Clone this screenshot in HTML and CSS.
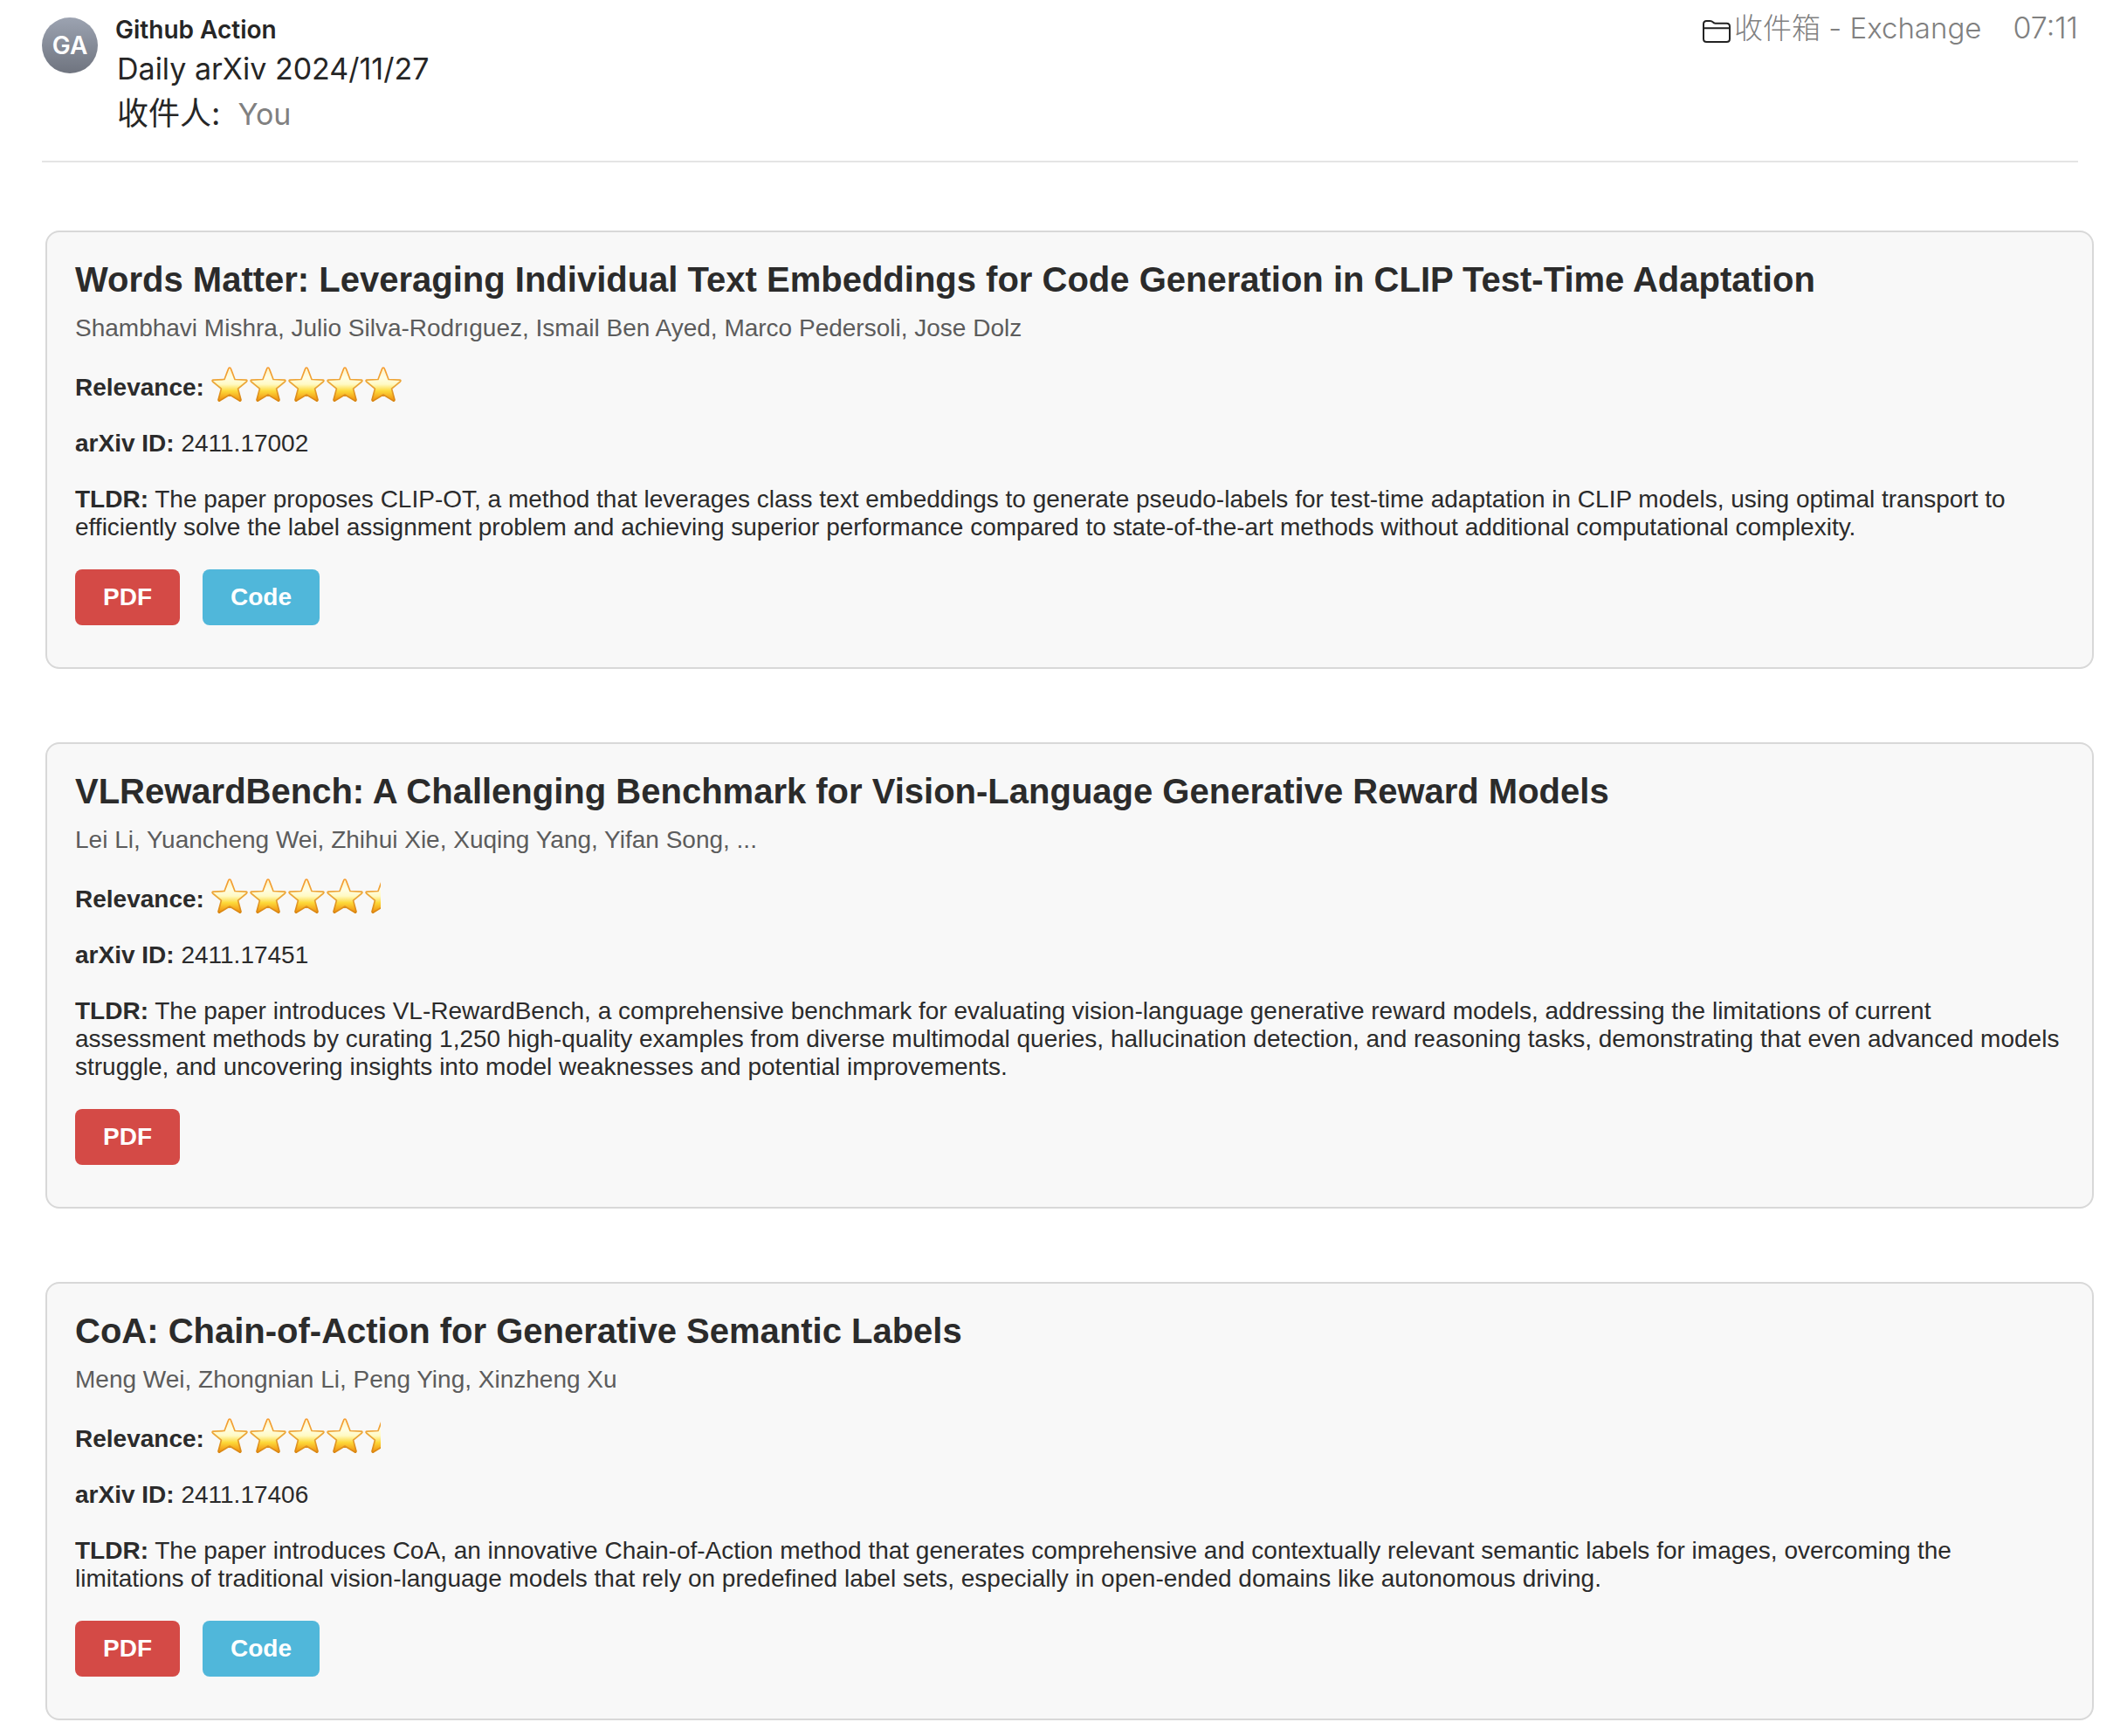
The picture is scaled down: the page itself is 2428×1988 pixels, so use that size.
FILE: index.html
```html
<!DOCTYPE html>
<html lang="zh-CN">
<head>
  <meta charset="UTF-8" />
  <title>Daily arXiv 2024/11/27</title>
  <link rel="stylesheet" href="styles.css">
</head>
<body>

  <!-- shared star shape -->
  <svg class="defs" width="0" height="0" aria-hidden="true">
    <defs>
      <linearGradient id="star-fill" x1="0" y1="0" x2="0" y2="1">
        <stop offset="0" stop-color="#fff3c0" />
        <stop offset="0.3" stop-color="#fffde4" />
        <stop offset="0.5" stop-color="#fffac4" />
        <stop offset="0.7" stop-color="#fdd93a" />
        <stop offset="1" stop-color="#f08c0c" />
      </linearGradient>
      <linearGradient id="star-line" x1="0" y1="0" x2="0" y2="1">
        <stop offset="0" stop-color="#f59a2c" />
        <stop offset="0.5" stop-color="#eba93c" />
        <stop offset="1" stop-color="#d98510" />
      </linearGradient>
      <symbol id="star" viewBox="0 0 44 40">
        <path d="M21 1 Q22 1 22.5 2.5 L27 14.5 L40 15.1 Q41.6 15.8 40.4 17 L30.6 25.2 L34 38 Q33.8 39.6 32.2 38.9 L21 32 L9.8 38.9 Q8.2 39.6 8 38 L11.4 25.2 L1.6 17 Q0.4 15.8 2 15.1 L15 14.5 L19.5 2.5 Q20 1 21 1 Z" fill="url(#star-fill)" stroke="url(#star-line)" stroke-width="1.7" stroke-linejoin="round" />
      </symbol>
    </defs>
  </svg>

  <header class="mail-header">
    <div class="avatar">GA</div>
    <div class="mail-info">
      <div class="sender">Github Action</div>
      <div class="subject">Daily arXiv 2024/11/27</div>
      <div class="recipient">收件人: <span class="you">You</span></div>
    </div>
    <div class="mail-meta">
      <svg class="folder" viewBox="0 0 32 26" aria-hidden="true">
        <path d="M1 21.5V4.5Q1 1 4.500 1H8.500Q10.500 1 11.500 2.200Q12.800 3.700 14.500 3.700H27.500Q31 3.700 31 7.200V21.500Q31 25 27.500 25H4.500Q1 25 1 21.500Z M1 9.300H31" fill="none" stroke="#222" stroke-width="2" />
      </svg>
      <span class="mailbox">收件箱 - Exchange</span>
      <span class="time">07:11</span>
    </div>
  </header>

  <main class="papers">

    <article class="paper">
      <h2>Words Matter: Leveraging Individual Text Embeddings for Code Generation in CLIP Test-Time Adaptation</h2>
      <p class="authors">Shambhavi Mishra, Julio Silva-Rodrıguez, Ismail Ben Ayed, Marco Pedersoli, Jose Dolz</p>
      <div class="relevance">
        <strong>Relevance:</strong>
        <span class="stars" role="img" aria-label="5 of 5">
          <svg class="star"><use href="#star" /></svg>
          <svg class="star"><use href="#star" /></svg>
          <svg class="star"><use href="#star" /></svg>
          <svg class="star"><use href="#star" /></svg>
          <svg class="star"><use href="#star" /></svg>
        </span>
      </div>
      <p><strong>arXiv ID:</strong> 2411.17002</p>
      <p><strong>TLDR:</strong> The paper proposes CLIP-OT, a method that leverages class text embeddings to generate pseudo-labels for test-time adaptation in CLIP models, using optimal transport to efficiently solve the label assignment problem and achieving superior performance compared to state-of-the-art methods without additional computational complexity.</p>
      <div class="links">
        <a class="btn pdf" href="#">PDF</a>
        <a class="btn code" href="#">Code</a>
      </div>
    </article>

    <article class="paper">
      <h2>VLRewardBench: A Challenging Benchmark for Vision-Language Generative Reward Models</h2>
      <p class="authors">Lei Li, Yuancheng Wei, Zhihui Xie, Xuqing Yang, Yifan Song, ...</p>
      <div class="relevance">
        <strong>Relevance:</strong>
        <span class="stars" role="img" aria-label="4.5 of 5">
          <svg class="star"><use href="#star" /></svg>
          <svg class="star"><use href="#star" /></svg>
          <svg class="star"><use href="#star" /></svg>
          <svg class="star"><use href="#star" /></svg>
          <span class="half"><svg class="star"><use href="#star" /></svg></span>
        </span>
      </div>
      <p><strong>arXiv ID:</strong> 2411.17451</p>
      <p><strong>TLDR:</strong> The paper introduces VL-RewardBench, a comprehensive benchmark for evaluating vision-language generative reward models, addressing the limitations of current assessment methods by curating 1,250 high-quality examples from diverse multimodal queries, hallucination detection, and reasoning tasks, demonstrating that even advanced models struggle, and uncovering insights into model weaknesses and potential improvements.</p>
      <div class="links">
        <a class="btn pdf" href="#">PDF</a>
      </div>
    </article>

    <article class="paper">
      <h2>CoA: Chain-of-Action for Generative Semantic Labels</h2>
      <p class="authors">Meng Wei, Zhongnian Li, Peng Ying, Xinzheng Xu</p>
      <div class="relevance">
        <strong>Relevance:</strong>
        <span class="stars" role="img" aria-label="4.5 of 5">
          <svg class="star"><use href="#star" /></svg>
          <svg class="star"><use href="#star" /></svg>
          <svg class="star"><use href="#star" /></svg>
          <svg class="star"><use href="#star" /></svg>
          <span class="half"><svg class="star"><use href="#star" /></svg></span>
        </span>
      </div>
      <p><strong>arXiv ID:</strong> 2411.17406</p>
      <p><strong>TLDR:</strong> The paper introduces CoA, an innovative Chain-of-Action method that generates comprehensive and contextually relevant semantic labels for images, overcoming the limitations of traditional vision-language models that rely on predefined label sets, especially in open-ended domains like autonomous driving.</p>
      <div class="links">
        <a class="btn pdf" href="#">PDF</a>
        <a class="btn code" href="#">Code</a>
      </div>
    </article>

  </main>

</body>
</html>
```
FILE: styles.css
```css
* {
  box-sizing: border-box;
}

body {
  margin: 0;
  background: #fff;
  color: #2b2b2b;
  font-family: "Liberation Sans", Arial, sans-serif;
  font-size: 28px;
  line-height: 32px;
}

.defs {
  display: block;
}

/* mail header */
.mail-header {
  display: flex;
  align-items: flex-start;
  margin: 0 48px;
  padding: 16px 0 28px;
  border-bottom: 2px solid #e4e4e4;
  font-family: Inter, "Noto Sans CJK SC", sans-serif;
}

.avatar {
  width: 64px;
  height: 64px;
  margin-top: 4px;
  border-radius: 50%;
  background: linear-gradient(#9ca3b1, #6f747f);
  color: #fff;
  font-size: 28px;
  font-weight: 600;
  line-height: 64px;
  text-align: center;
}

.mail-info {
  flex: 1;
  margin-left: 20px;
  color: #262626;
}

.sender {
  font-size: 28px;
  font-weight: 600;
  line-height: 36px;
}

.subject {
  padding-left: 2px;
  font-size: 34px;
  line-height: 54px;
}

.recipient {
  height: 50px;
  padding-left: 2px;
  font-size: 36px;
  line-height: 48px;
}

.you {
  margin-left: 10px;
  color: #808080;
  font-size: 34px;
}

.mail-meta {
  display: flex;
  align-items: flex-start;
  color: #808080;
  font-size: 34px;
  font-weight: 300;
  line-height: 32px;
}

.folder {
  width: 32px;
  height: 26px;
  margin: 7px 4px 0 0;
}

.mailbox {
  font-size: 33px;
}

.time {
  margin-left: 36px;
}

/* paper cards */
.papers {
  display: flex;
  flex-direction: column;
  gap: 84px;
  padding: 78px 30px 18px 52px;
}

.paper {
  padding: 32px 32px 48px;
  border: 2px solid #d8d8d8;
  border-radius: 16px;
  background: #f8f8f8;
}

.paper h2 {
  margin: 0 0 18px;
  font-size: 40px;
  line-height: 44px;
}

.paper p {
  margin: 0 0 32px;
}

.paper .authors {
  margin-bottom: 28px;
  color: #5c5c5c;
}

.relevance {
  display: flex;
  align-items: flex-end;
  gap: 8px;
  height: 40px;
  margin-bottom: 32px;
}

.stars {
  display: flex;
}

.star {
  display: block;
  flex: none;
  width: 44px;
  height: 40px;
}

.half {
  width: 18px;
  overflow: hidden;
}

.links {
  display: flex;
  gap: 26px;
}

.btn {
  padding: 16px 32px;
  border-radius: 8px;
  color: #fff;
  font-weight: bold;
  text-decoration: none;
}

.pdf {
  background: #d44a46;
}

.code {
  background: #50b7da;
}
```
